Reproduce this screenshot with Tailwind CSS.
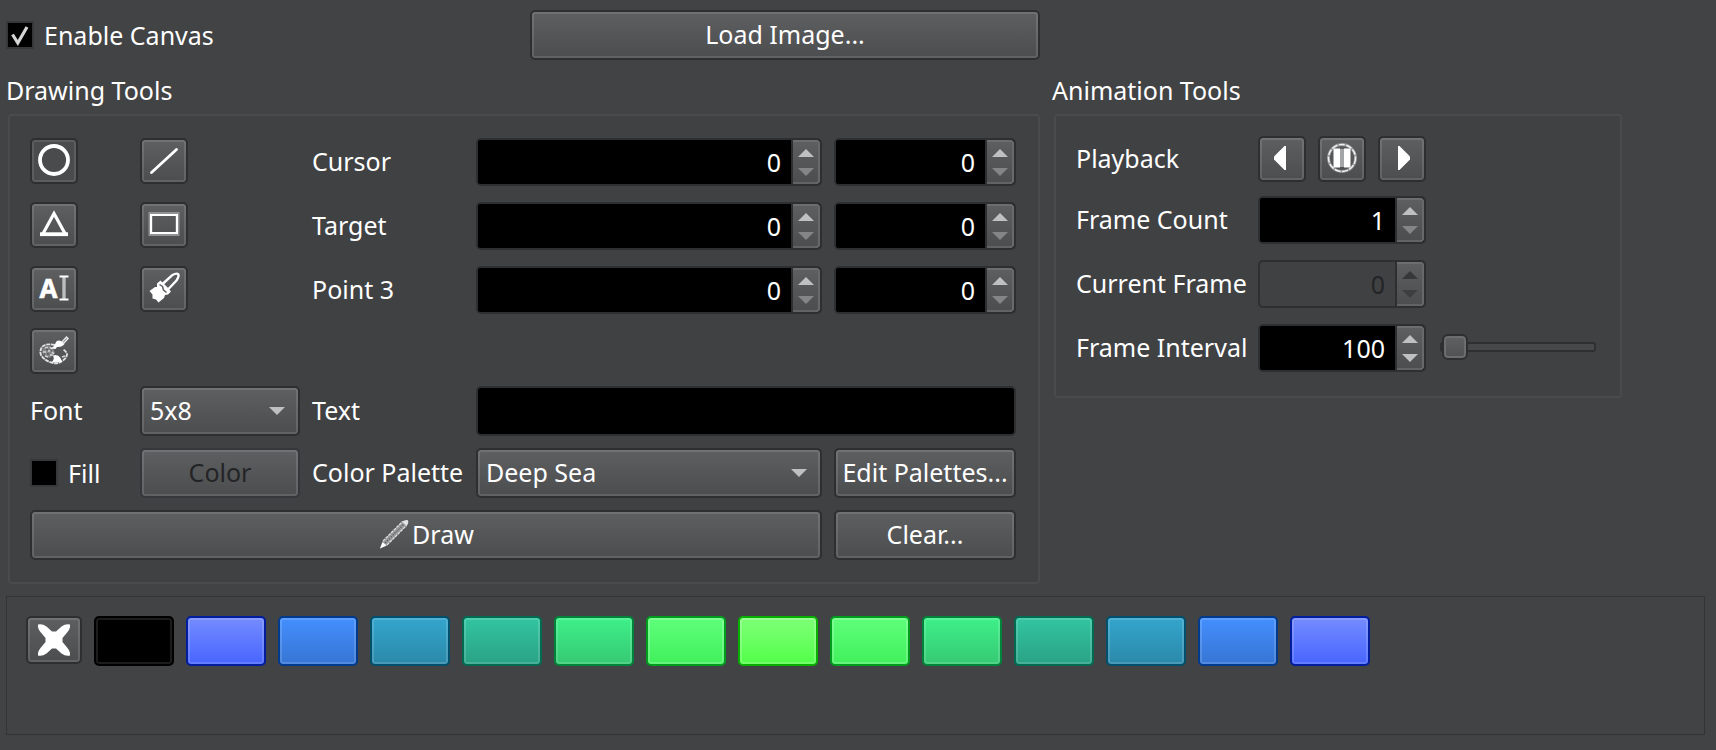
<!DOCTYPE html>
<html lang="en">
<head>
<meta charset="utf-8">
<title>Canvas</title>
<script src="https://cdn.jsdelivr.net/npm/@tailwindcss/browser@4"></script>
</head>
<body class="min-h-screen bg-[#424344] pt-2.5 pr-[11px] pb-3 pl-1.5 font-['Noto_Sans','Open_Sans',sans-serif] text-[25px] leading-9 text-white">

<main class="flex flex-col gap-3">
  <div class="grid grid-cols-[1034fr_570fr_71fr] items-start gap-3">

    <div class="col-start-1 grid grid-cols-[512fr_510fr] items-center gap-3">
      <label class="flex items-center gap-2.5">
        <span class="relative flex">
          <input type="checkbox" checked class="peer size-7 appearance-none border-2 border-[#37383a] bg-black">
          <svg class="pointer-events-none absolute inset-0 hidden peer-checked:block" width="28" height="28" viewBox="0 0 28 28" fill="none" stroke="#d4d4d4" stroke-width="3.2"><path d="M6.5 13.5L11.8 22L21 6"/></svg>
        </span>
        Enable Canvas
      </label>
      <button class="h-[50px] rounded-[5px] border-2 border-[#2e2f31] bg-linear-to-b from-[#5e5f61] to-[#4c4d4f] pb-0.5 inset-ring-2 inset-ring-white/12">Load Image...</button>
    </div>

    <!-- Drawing tools -->
    <section class="col-start-1">
      <h2 class="mb-1.5">Drawing Tools</h2>
      <div class="ml-0.5 grid grid-cols-[98px_160px_152px_346fr_182fr] grid-rows-[52px_52px_52px_46px_50px_50px_50px] gap-3 rounded-[4px] border-2 border-[#4a4b4d] bg-[#404143] pt-5 pr-[22px] pb-[22px] pl-5">

        <div class="flex h-12 self-center"><button aria-label="Circle" class="flex h-[46px] w-12 items-center justify-center rounded-[5px] border-2 border-[#2e2f31] bg-[#4a4b4d] pb-0.5 inset-ring-2 inset-ring-white/10">
          <svg class="shrink-0" width="32" height="32" viewBox="0 0 32 32" fill="none" stroke="#fff" stroke-width="3.8"><circle cx="16" cy="16" r="14"/></svg></button></div>
        <div class="flex h-12 self-center"><button aria-label="Line" class="flex h-[46px] w-12 items-center justify-center rounded-[5px] border-2 border-[#2e2f31] bg-linear-to-b from-[#5e5f61] to-[#4c4d4f] pb-0.5 inset-ring-2 inset-ring-white/12">
          <svg class="shrink-0" width="32" height="32" viewBox="0 0 32 32" fill="none" stroke="#fff" stroke-width="2.8" stroke-linecap="round"><path d="M3.5 28.5L28.5 5.5"/></svg></button></div>
        <label for="cx" class="self-center pb-0.5">Cursor</label>
        <div class="flex h-12 self-center overflow-hidden rounded-[5px] border-2 border-[#2e2f31] bg-black">
          <input id="cx" type="number" value="0" class="min-w-0 flex-1 bg-black pr-2.5 text-right [appearance:textfield] [&::-webkit-inner-spin-button]:appearance-none">
          <div class="flex w-[29px] flex-col rounded-r-[4px] border-l-2 border-[#2e2f31] bg-linear-to-b from-[#5e5f61] to-[#4c4d4f] pr-0.5 shadow-[inset_-2px_0_#68696b,inset_0_2px_#6c6d6f,inset_0_-2px_#626365]">
            <button aria-label="Increase" class="flex flex-1 items-end justify-center pb-[5px]"><svg width="16" height="8"><path d="M0 8L8 0L16 8z" fill="#bfc0c2"/></svg></button>
            <button aria-label="Decrease" class="flex flex-1 items-start justify-center pt-1.5"><svg width="16" height="8"><path d="M0 0L8 8L16 0z" fill="#848587"/></svg></button>
          </div>
        </div>
        <div class="flex h-12 self-center overflow-hidden rounded-[5px] border-2 border-[#2e2f31] bg-black">
          <input aria-label="Cursor Y" type="number" value="0" class="min-w-0 flex-1 bg-black pr-2.5 text-right [appearance:textfield] [&::-webkit-inner-spin-button]:appearance-none">
          <div class="flex w-[29px] flex-col rounded-r-[4px] border-l-2 border-[#2e2f31] bg-linear-to-b from-[#5e5f61] to-[#4c4d4f] pr-0.5 shadow-[inset_-2px_0_#68696b,inset_0_2px_#6c6d6f,inset_0_-2px_#626365]">
            <button aria-label="Increase" class="flex flex-1 items-end justify-center pb-[5px]"><svg width="16" height="8"><path d="M0 8L8 0L16 8z" fill="#bfc0c2"/></svg></button>
            <button aria-label="Decrease" class="flex flex-1 items-start justify-center pt-1.5"><svg width="16" height="8"><path d="M0 0L8 8L16 0z" fill="#848587"/></svg></button>
          </div>
        </div>

        <div class="flex h-12 self-center"><button aria-label="Triangle" class="flex h-[46px] w-12 items-center justify-center rounded-[5px] border-2 border-[#2e2f31] bg-linear-to-b from-[#5e5f61] to-[#4c4d4f] pb-0.5 inset-ring-2 inset-ring-white/12">
          <svg class="shrink-0" width="32" height="32" viewBox="0 0 32 32" fill="none" stroke="#fff"><path stroke-width="3.2" d="M4.5 26.5L16 5.5L27.5 26.5z"/><path stroke-width="3.8" d="M2 26.2H30"/></svg></button></div>
        <div class="flex h-12 self-center"><button aria-label="Rectangle" class="flex h-[46px] w-12 items-center justify-center rounded-[5px] border-2 border-[#2e2f31] bg-linear-to-b from-[#5e5f61] to-[#4c4d4f] pb-0.5 inset-ring-2 inset-ring-white/12">
          <svg class="shrink-0" width="32" height="32" viewBox="0 0 32 32" fill="none"><rect x="2.5" y="6" width="27" height="20" stroke="#919294" stroke-width="4"/><rect x="3" y="7" width="26" height="18" stroke="#fff" stroke-width="2"/></svg></button></div>
        <label for="tx" class="self-center pb-0.5">Target</label>
        <div class="flex h-12 self-center overflow-hidden rounded-[5px] border-2 border-[#2e2f31] bg-black">
          <input id="tx" type="number" value="0" class="min-w-0 flex-1 bg-black pr-2.5 text-right [appearance:textfield] [&::-webkit-inner-spin-button]:appearance-none">
          <div class="flex w-[29px] flex-col rounded-r-[4px] border-l-2 border-[#2e2f31] bg-linear-to-b from-[#5e5f61] to-[#4c4d4f] pr-0.5 shadow-[inset_-2px_0_#68696b,inset_0_2px_#6c6d6f,inset_0_-2px_#626365]">
            <button aria-label="Increase" class="flex flex-1 items-end justify-center pb-[5px]"><svg width="16" height="8"><path d="M0 8L8 0L16 8z" fill="#bfc0c2"/></svg></button>
            <button aria-label="Decrease" class="flex flex-1 items-start justify-center pt-1.5"><svg width="16" height="8"><path d="M0 0L8 8L16 0z" fill="#848587"/></svg></button>
          </div>
        </div>
        <div class="flex h-12 self-center overflow-hidden rounded-[5px] border-2 border-[#2e2f31] bg-black">
          <input aria-label="Target Y" type="number" value="0" class="min-w-0 flex-1 bg-black pr-2.5 text-right [appearance:textfield] [&::-webkit-inner-spin-button]:appearance-none">
          <div class="flex w-[29px] flex-col rounded-r-[4px] border-l-2 border-[#2e2f31] bg-linear-to-b from-[#5e5f61] to-[#4c4d4f] pr-0.5 shadow-[inset_-2px_0_#68696b,inset_0_2px_#6c6d6f,inset_0_-2px_#626365]">
            <button aria-label="Increase" class="flex flex-1 items-end justify-center pb-[5px]"><svg width="16" height="8"><path d="M0 8L8 0L16 8z" fill="#bfc0c2"/></svg></button>
            <button aria-label="Decrease" class="flex flex-1 items-start justify-center pt-1.5"><svg width="16" height="8"><path d="M0 0L8 8L16 0z" fill="#848587"/></svg></button>
          </div>
        </div>

        <div class="flex h-12 self-center"><button aria-label="Text tool" class="flex h-[46px] w-12 items-center justify-center rounded-[5px] border-2 border-[#2e2f31] bg-linear-to-b from-[#5e5f61] to-[#4c4d4f] pb-0.5 inset-ring-2 inset-ring-white/12">
          <svg class="shrink-0 overflow-visible" width="32" height="32" viewBox="0 0 32 32"><text x="10.5" y="26" text-anchor="middle" font-size="26" font-weight="700" fill="#fff" stroke="#fff" stroke-width=".6">A</text><path d="M26 5V27" stroke="#bcbdbf" stroke-width="3.4"/><path d="M21.5 4.5H30.5M21.5 27.5H30.5" stroke="#fff" stroke-width="2"/></svg></button></div>
        <div class="flex h-12 self-center"><button aria-label="Brush" class="flex h-[46px] w-12 items-center justify-center rounded-[5px] border-2 border-[#2e2f31] bg-linear-to-b from-[#5e5f61] to-[#4c4d4f] pb-0.5 inset-ring-2 inset-ring-white/12">
          <svg class="shrink-0" width="32" height="32" viewBox="0 0 32 32"><path d="M1.5 19L7 15L9 15L9 11.500L12.500 8.500L23 19.500L20 22.500L17 23L16 26L10.5 30.500L8 27.5L4.500 26.500L4.5 22.5z" fill="#fff"/><path d="M14.500 12L24 3.300Q28.500 .8 30.200 2.200Q31.500 4 28.500 8.500L20 17.500z" fill="#5a5b5d" stroke="#fff" stroke-width="2.4" stroke-linejoin="round"/><path d="M11.500 12.500L14.500 14.500L15.500 18L18.500 20.500" fill="none" stroke="#606163" stroke-width="1.500"/></svg></button></div>
        <label for="px" class="self-center pb-0.5">Point 3</label>
        <div class="flex h-12 self-center overflow-hidden rounded-[5px] border-2 border-[#2e2f31] bg-black">
          <input id="px" type="number" value="0" class="min-w-0 flex-1 bg-black pr-2.5 text-right [appearance:textfield] [&::-webkit-inner-spin-button]:appearance-none">
          <div class="flex w-[29px] flex-col rounded-r-[4px] border-l-2 border-[#2e2f31] bg-linear-to-b from-[#5e5f61] to-[#4c4d4f] pr-0.5 shadow-[inset_-2px_0_#68696b,inset_0_2px_#6c6d6f,inset_0_-2px_#626365]">
            <button aria-label="Increase" class="flex flex-1 items-end justify-center pb-[5px]"><svg width="16" height="8"><path d="M0 8L8 0L16 8z" fill="#bfc0c2"/></svg></button>
            <button aria-label="Decrease" class="flex flex-1 items-start justify-center pt-1.5"><svg width="16" height="8"><path d="M0 0L8 8L16 0z" fill="#848587"/></svg></button>
          </div>
        </div>
        <div class="flex h-12 self-center overflow-hidden rounded-[5px] border-2 border-[#2e2f31] bg-black">
          <input aria-label="Point 3 Y" type="number" value="0" class="min-w-0 flex-1 bg-black pr-2.5 text-right [appearance:textfield] [&::-webkit-inner-spin-button]:appearance-none">
          <div class="flex w-[29px] flex-col rounded-r-[4px] border-l-2 border-[#2e2f31] bg-linear-to-b from-[#5e5f61] to-[#4c4d4f] pr-0.5 shadow-[inset_-2px_0_#68696b,inset_0_2px_#6c6d6f,inset_0_-2px_#626365]">
            <button aria-label="Increase" class="flex flex-1 items-end justify-center pb-[5px]"><svg width="16" height="8"><path d="M0 8L8 0L16 8z" fill="#bfc0c2"/></svg></button>
            <button aria-label="Decrease" class="flex flex-1 items-start justify-center pt-1.5"><svg width="16" height="8"><path d="M0 0L8 8L16 0z" fill="#848587"/></svg></button>
          </div>
        </div>

        <button aria-label="Palette fill" class="col-start-1 flex h-[46px] w-12 items-center justify-center rounded-[5px] border-2 border-[#2e2f31] bg-linear-to-b from-[#5e5f61] to-[#4c4d4f] pb-0.5 inset-ring-2 inset-ring-white/12">
          <svg class="shrink-0" width="32" height="32" viewBox="0 0 32 32" fill="none"><path d="M17 11Q8 9 4 13Q1.5 17 3 21Q6 26 12 28Q19 31 24 27Q29 24 29 20Q28 17 25 15.500" stroke="#e2e2e2" stroke-width="1.9" stroke-dasharray="4 .7"/><path d="M5 14Q11 10 15 14L17 19L12 24Q5 22 4 18z" fill="#858688"/><path d="M7 13.5h3M12 13l2 2M5 18h3M10 17h2M7 22l3 1M12 21h3M14 18l2 2M24 23l3-1" stroke="#d4d4d4" stroke-width="1.5"/><path d="M8 15.5h2M9 20h2M13 16.5h1M6 20h1" stroke="#58595b" stroke-width="1.6"/><path d="M12.500 14.500Q17 12 17.500 9Q19 5.500 23 7L26.500 10Q24 13.500 19 13L17.500 15z" fill="#fff"/><path d="M24 8L28.500 3L30 4.500L25.500 9.500z" fill="#6a6b6d" stroke="#e8e8e8" stroke-width="1.5"/><path d="M15 21.500Q20 20 22.500 24L24 28L13 28.5Q17 26 15 21.500z" fill="#fff"/></svg></button>

        <label for="font" class="col-start-1 self-center pb-0.5">Font</label>
        <div class="relative">
          <select id="font" class="h-full w-full appearance-none rounded-[5px] border-2 border-[#2e2f31] bg-linear-to-b from-[#5e5f61] to-[#4c4d4f] pb-0.5 pl-2 inset-ring-2 inset-ring-white/12"><option>5x8</option></select>
          <svg class="pointer-events-none absolute top-[21px] right-[15px]" width="16" height="8"><path d="M0 0L8 8L16 0z" fill="#bfc0c2"/></svg>
        </div>
        <label for="text" class="self-center pb-0.5">Text</label>
        <input id="text" type="text" class="col-span-2 min-w-0 rounded-[5px] border-2 border-[#2e2f31] bg-black px-2">

        <label class="flex items-center gap-2.5 self-center">
          <input type="checkbox" class="size-7 appearance-none border-2 border-[#37383a] bg-black">Fill
        </label>
        <button disabled class="rounded-[5px] border-2 border-[#36373a] bg-linear-to-b from-[#5e5f61] to-[#4c4d4f] pb-0.5 text-[#232426] inset-ring-2 inset-ring-white/12">Color</button>
        <label for="palette" class="self-center pb-0.5 whitespace-nowrap">Color Palette</label>
        <div class="relative">
          <select id="palette" class="h-full w-full appearance-none rounded-[5px] border-2 border-[#2e2f31] bg-linear-to-b from-[#5e5f61] to-[#4c4d4f] pb-0.5 pl-2 inset-ring-2 inset-ring-white/12"><option>Deep Sea</option></select>
          <svg class="pointer-events-none absolute top-[21px] right-[15px]" width="16" height="8"><path d="M0 0L8 8L16 0z" fill="#bfc0c2"/></svg>
        </div>
        <button class="rounded-[5px] border-2 border-[#2e2f31] bg-linear-to-b from-[#5e5f61] to-[#4c4d4f] pb-0.5 whitespace-nowrap inset-ring-2 inset-ring-white/12">Edit Palettes...</button>

        <button class="col-span-4 flex items-center justify-center gap-0.5 rounded-[5px] border-2 border-[#2e2f31] bg-linear-to-b from-[#5e5f61] to-[#4c4d4f] pb-0.5 inset-ring-2 inset-ring-white/12">
          <svg width="32" height="32" viewBox="0 0 32 32"><path d="M2 30.500L4.500 23.500L25 3L30 2L29 7L9 27.500z" fill="#98999b"/><path d="M5 23L24.500 3.500M9 27L28.500 7.500" stroke="#dedede" stroke-width="1.3" stroke-dasharray="3 .8"/><path d="M7 25L26 6" stroke="#636466" stroke-width="1.3" stroke-dasharray="1.5 1.2"/><path d="M2 30.500L4.500 24L8.500 27.5z" fill="#fff"/><path d="M24 3.500Q29 1 30 2.500Q31 5 28.5 8z" fill="#e4e4e4"/></svg>Draw</button>
        <button class="rounded-[5px] border-2 border-[#2e2f31] bg-linear-to-b from-[#5e5f61] to-[#4c4d4f] pb-0.5 inset-ring-2 inset-ring-white/12">Clear...</button>
      </div>
    </section>

    <!-- Animation tools -->
    <section class="col-start-2">
      <h2 class="mb-1.5">Animation Tools</h2>
      <div class="ml-0.5 grid grid-cols-[170px_168px_minmax(0,1fr)] grid-rows-[46px_52px_52px_52px] items-center gap-3 rounded-[4px] border-2 border-[#4a4b4d] bg-[#404143] pt-5 pr-[22px] pb-[22px] pl-5">
        <span class="pb-0.5">Playback</span>
        <div class="flex justify-between">
          <button aria-label="Play backwards" class="flex h-[46px] w-12 items-center justify-center rounded-[5px] border-2 border-[#2e2f31] bg-linear-to-b from-[#5e5f61] to-[#4c4d4f] pb-0.5 inset-ring-2 inset-ring-white/12">
            <svg class="shrink-0" width="32" height="32" viewBox="0 0 32 32"><path d="M20 4V28H18.5L8 17.5V14.5L18.5 4z" fill="#fff"/></svg></button>
          <button aria-label="Pause" class="flex h-[46px] w-12 items-center justify-center rounded-[5px] border-2 border-[#2e2f31] bg-linear-to-b from-[#5e5f61] to-[#4c4d4f] pb-0.5 inset-ring-2 inset-ring-white/12">
            <svg class="shrink-0" width="32" height="32" viewBox="0 0 32 32"><circle cx="16" cy="16" r="13.5" fill="none" stroke="#919294" stroke-width="3"/><circle cx="16" cy="16" r="13.5" fill="none" stroke="#f0f0f0" stroke-width="1.5" stroke-dasharray="6 1.5"/><path d="M14 7h4v18h-4z" fill="#a4a5a7"/><path d="M7.5 6.500h6.500v19h-6.500zM18 6.500h6.500v19H18z" fill="#fff"/></svg></button>
          <button aria-label="Play" class="flex h-[46px] w-12 items-center justify-center rounded-[5px] border-2 border-[#2e2f31] bg-linear-to-b from-[#5e5f61] to-[#4c4d4f] pb-0.5 inset-ring-2 inset-ring-white/12">
            <svg class="shrink-0" width="32" height="32" viewBox="0 0 32 32"><path d="M12 4V28H13.5L24 17.5V14.5L13.5 4z" fill="#fff"/></svg></button>
        </div>

        <label for="count" class="col-start-1 pb-0.5 whitespace-nowrap">Frame Count</label>
        <div class="flex h-12 overflow-hidden rounded-[5px] border-2 border-[#2e2f31] bg-black">
          <input id="count" type="number" value="1" class="min-w-0 flex-1 bg-black pr-2.5 text-right [appearance:textfield] [&::-webkit-inner-spin-button]:appearance-none">
          <div class="flex w-[29px] flex-col rounded-r-[4px] border-l-2 border-[#2e2f31] bg-linear-to-b from-[#5e5f61] to-[#4c4d4f] pr-0.5 shadow-[inset_-2px_0_#68696b,inset_0_2px_#6c6d6f,inset_0_-2px_#626365]">
            <button aria-label="Increase" class="flex flex-1 items-end justify-center pb-[5px]"><svg width="16" height="8"><path d="M0 8L8 0L16 8z" fill="#bfc0c2"/></svg></button>
            <button aria-label="Decrease" class="flex flex-1 items-start justify-center pt-1.5"><svg width="16" height="8"><path d="M0 0L8 8L16 0z" fill="#848587"/></svg></button>
          </div>
        </div>

        <label for="current" class="col-start-1 pb-0.5 whitespace-nowrap">Current Frame</label>
        <div class="flex h-12 overflow-hidden rounded-[5px] border-2 border-[#2e2f31] bg-[#404143]">
          <input id="current" type="number" value="0" disabled class="min-w-0 flex-1 pr-2.5 text-right text-[#232426] [appearance:textfield] [&::-webkit-inner-spin-button]:appearance-none">
          <div class="flex w-[29px] flex-col rounded-r-[4px] border-l-2 border-[#2e2f31] bg-linear-to-b from-[#5e5f61] to-[#4c4d4f] pr-0.5 shadow-[inset_-2px_0_#68696b,inset_0_2px_#6c6d6f,inset_0_-2px_#626365]">
            <button disabled aria-label="Increase" class="flex flex-1 items-end justify-center pb-[5px]"><svg width="16" height="8"><path d="M0 8L8 0L16 8z" fill="#363739"/></svg></button>
            <button disabled aria-label="Decrease" class="flex flex-1 items-start justify-center pt-1.5"><svg width="16" height="8"><path d="M0 0L8 8L16 0z" fill="#3d3e40"/></svg></button>
          </div>
        </div>

        <label for="interval" class="col-start-1 pb-0.5 whitespace-nowrap">Frame Interval</label>
        <div class="flex h-12 overflow-hidden rounded-[5px] border-2 border-[#2e2f31] bg-black">
          <input id="interval" type="number" value="100" class="min-w-0 flex-1 bg-black pr-2.5 text-right [appearance:textfield] [&::-webkit-inner-spin-button]:appearance-none">
          <div class="flex w-[29px] flex-col rounded-r-[4px] border-l-2 border-[#2e2f31] bg-linear-to-b from-[#5e5f61] to-[#4c4d4f] pr-0.5 shadow-[inset_-2px_0_#68696b,inset_0_2px_#6c6d6f,inset_0_-2px_#626365]">
            <button aria-label="Increase" class="flex flex-1 items-end justify-center pb-[5px]"><svg width="16" height="8"><path d="M0 8L8 0L16 8z" fill="#bfc0c2"/></svg></button>
            <button aria-label="Decrease" class="flex flex-1 items-start justify-center pt-1.5"><svg width="16" height="8"><path d="M0 0L8 8L16 0z" fill="#bfc0c2"/></svg></button>
          </div>
        </div>
        <input aria-label="Frame interval slider" type="range" min="0" max="1000" value="0" class="mx-0.5 mb-0.5 h-2.5 appearance-none rounded-[3px] border-2 border-[#2e2f31] bg-[#474849] [&::-webkit-slider-thumb]:size-[26px] [&::-webkit-slider-thumb]:appearance-none [&::-webkit-slider-thumb]:rounded-[6px] [&::-webkit-slider-thumb]:border-2 [&::-webkit-slider-thumb]:border-[#2e2f31] [&::-webkit-slider-thumb]:bg-linear-to-b [&::-webkit-slider-thumb]:from-[#606163] [&::-webkit-slider-thumb]:to-[#505153] [&::-webkit-slider-thumb]:shadow-[inset_0_0_0_2px_#6c6d6f]">
      </div>
    </section>
  </div>

  <!-- Palette colours -->
  <section aria-label="Palette" class="flex min-h-[139px] items-start gap-3 border border-[#333436] p-[19px]">
    <button aria-label="No colour" class="flex h-12 w-14 items-center justify-center rounded-[5px] border-2 border-[#2e2f31] bg-linear-to-b from-[#5e5f61] to-[#4c4d4f] inset-ring-2 inset-ring-white/12">
      <svg width="32" height="32" viewBox="0 0 32 32"><path d="M0 .5Q4 -.8 8.500 2.500L14 7.500H18L23.500 2.500Q28 -.8 32 .5Q32.800 4 29.500 8L24.500 14V18L29.500 24Q32.800 28 32 31.500Q28 32.800 23.500 29.500L18 24.500H14L8.500 29.500Q4 32.800 0 31.500Q-.8 28 2.500 24L7.500 18V14L2.500 8Q-.8 4 0 .5z" fill="#fff"/></svg></button>
    <button aria-label="Colour 1" class="h-[50px] w-20 rounded-[5px] border-2 border-black bg-black inset-ring-2 inset-ring-white/11"></button>
    <button aria-label="Colour 2" class="h-[50px] w-20 rounded-[5px] border-2 border-[#001c9f] bg-linear-to-b from-[#758bff] to-[#4864ff] inset-ring-2 inset-ring-white/15"></button>
    <button aria-label="Colour 3" class="h-[50px] w-20 rounded-[5px] border-2 border-[#003a8c] bg-linear-to-b from-[#448fff] to-[#3675d4] inset-ring-2 inset-ring-white/15"></button>
    <button aria-label="Colour 4" class="h-[50px] w-20 rounded-[5px] border-2 border-[#004f6c] bg-linear-to-b from-[#34a5cd] to-[#2b89a9] inset-ring-2 inset-ring-white/15"></button>
    <button aria-label="Colour 5" class="h-[50px] w-20 rounded-[5px] border-2 border-[#006b50] bg-linear-to-b from-[#32c5a1] to-[#2aa285] inset-ring-2 inset-ring-white/15"></button>
    <button aria-label="Colour 6" class="h-[50px] w-20 rounded-[5px] border-2 border-[#00833a] bg-linear-to-b from-[#3ef089] to-[#36c973] inset-ring-2 inset-ring-white/15"></button>
    <button aria-label="Colour 7" class="h-[50px] w-20 rounded-[5px] border-2 border-[#009c1e] bg-linear-to-b from-[#5eff7a] to-[#40f05b] inset-ring-2 inset-ring-white/20"></button>
    <button aria-label="Colour 8" class="h-[50px] w-20 rounded-[5px] border-2 border-[#07af00] bg-linear-to-b from-[#7dff76] to-[#50ff47] inset-ring-2 inset-ring-white/20"></button>
    <button aria-label="Colour 9" class="h-[50px] w-20 rounded-[5px] border-2 border-[#009c1e] bg-linear-to-b from-[#5eff7a] to-[#40f05b] inset-ring-2 inset-ring-white/20"></button>
    <button aria-label="Colour 10" class="h-[50px] w-20 rounded-[5px] border-2 border-[#00833a] bg-linear-to-b from-[#3ef089] to-[#36c973] inset-ring-2 inset-ring-white/15"></button>
    <button aria-label="Colour 11" class="h-[50px] w-20 rounded-[5px] border-2 border-[#006b50] bg-linear-to-b from-[#32c5a1] to-[#2aa285] inset-ring-2 inset-ring-white/15"></button>
    <button aria-label="Colour 12" class="h-[50px] w-20 rounded-[5px] border-2 border-[#004f6c] bg-linear-to-b from-[#34a5cd] to-[#2b89a9] inset-ring-2 inset-ring-white/15"></button>
    <button aria-label="Colour 13" class="h-[50px] w-20 rounded-[5px] border-2 border-[#003a8c] bg-linear-to-b from-[#448fff] to-[#3675d4] inset-ring-2 inset-ring-white/15"></button>
    <button aria-label="Colour 14" class="h-[50px] w-20 rounded-[5px] border-2 border-[#001c9f] bg-linear-to-b from-[#758bff] to-[#4864ff] inset-ring-2 inset-ring-white/15"></button>
  </section>
</main>
</body>
</html>
